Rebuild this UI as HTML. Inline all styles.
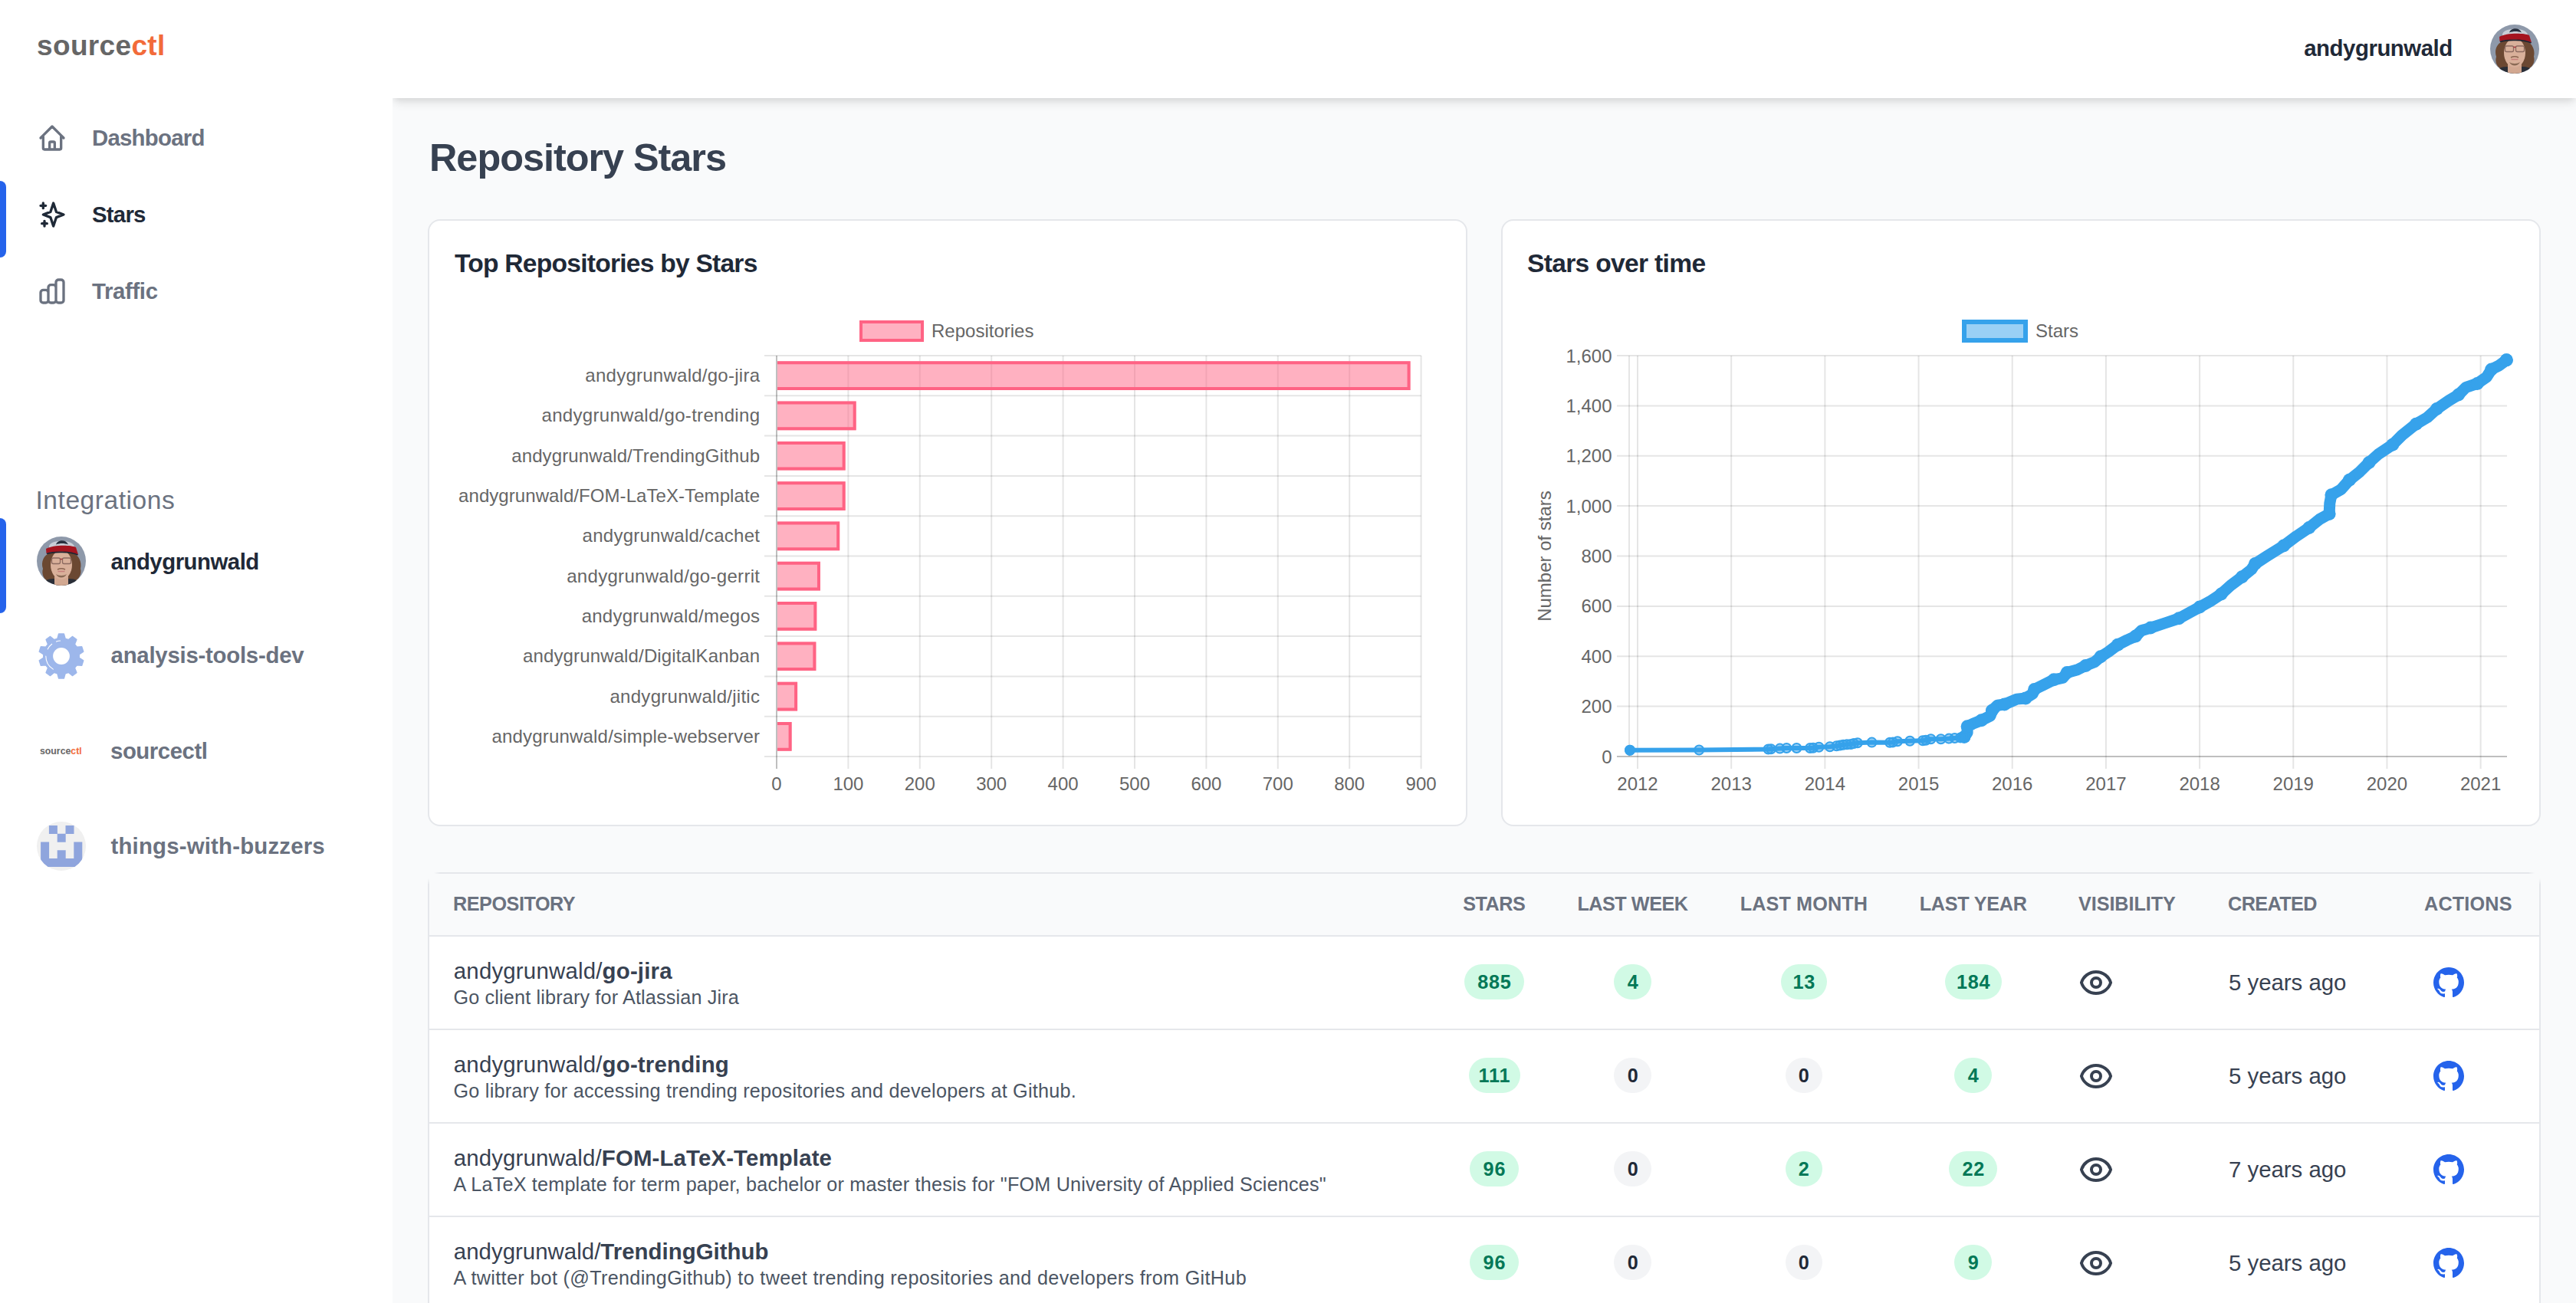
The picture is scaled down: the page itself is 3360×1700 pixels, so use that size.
<!DOCTYPE html>
<html><head><meta charset="utf-8"><title>sourcectl - Stars</title>
<style>
html,body{margin:0;padding:0;}
body{width:3360px;height:1700px;overflow:hidden;position:relative;background:#fff;font-family:"Liberation Sans", sans-serif;}
</style></head><body><div id="root" style="position:relative;width:3360px;height:1700px;overflow:hidden">
<div style="position:absolute;left:0;top:0;width:512px;height:1700px;background:#fff;z-index:3"><div style="position:absolute;top:40.88px;font-size:37.00px;line-height:37.00px;font-weight:700;color:#666666;white-space:nowrap;letter-spacing:0.350px;left:48.00px;">source<span style="color:#f26b3a">ctl</span></div><svg style="position:absolute;left:48px;top:160px" width="40" height="40" viewBox="0 0 24 24" fill="none" stroke="#6b7280" stroke-width="2" stroke-linecap="round" stroke-linejoin="round"><path d="M3 12l2-2m0 0l7-7 7 7M5 10v10a1 1 0 001 1h3m10-11l2 2m-2-2v10a1 1 0 01-1 1h-3m-6 0a1 1 0 001-1v-4a1 1 0 011-1h2a1 1 0 011 1v4a1 1 0 001 1m-6 0h6"/></svg><svg style="position:absolute;left:48px;top:260px" width="40" height="40" viewBox="0 0 24 24" fill="none" stroke="#1f2937" stroke-width="2" stroke-linecap="round" stroke-linejoin="round"><path d="M5 3v4M3 5h4M6 17v4m-2-2h4m5-16l2.286 6.857L21 12l-5.714 2.143L13 21l-2.286-6.857L5 12l5.714-2.143L13 3z"/></svg><svg style="position:absolute;left:48px;top:360px" width="40" height="40" viewBox="0 0 24 24" fill="none" stroke="#6b7280" stroke-width="2" stroke-linecap="round" stroke-linejoin="round"><path d="M9 19v-6a2 2 0 00-2-2H5a2 2 0 00-2 2v6a2 2 0 002 2h2a2 2 0 002-2zm0 0V9a2 2 0 012-2h2a2 2 0 012 2v10m-6 0a2 2 0 002 2h2a2 2 0 002-2m0 0V5a2 2 0 012-2h2a2 2 0 012 2v14a2 2 0 01-2 2h-2a2 2 0 01-2-2z"/></svg><div style="position:absolute;top:165.41px;font-size:29.40px;line-height:29.40px;font-weight:700;color:#6b7280;white-space:nowrap;letter-spacing:-0.770px;left:120.00px;">Dashboard</div><div style="position:absolute;top:264.81px;font-size:29.40px;line-height:29.40px;font-weight:700;color:#1f2937;white-space:nowrap;letter-spacing:-0.770px;left:120.00px;">Stars</div><div style="position:absolute;top:364.91px;font-size:29.40px;line-height:29.40px;font-weight:700;color:#6b7280;white-space:nowrap;letter-spacing:-0.370px;left:120.00px;">Traffic</div><div style="position:absolute;left:0;top:236px;width:8px;height:100px;background:#2563eb;border-radius:0 8px 8px 0"></div><div style="position:absolute;left:0;top:676px;width:8px;height:124px;background:#2563eb;border-radius:0 8px 8px 0"></div><div style="position:absolute;top:635.56px;font-size:33.60px;line-height:33.60px;font-weight:400;color:#6b7280;white-space:nowrap;letter-spacing:0.520px;left:46.50px;">Integrations</div><div style="position:absolute;top:717.61px;font-size:29.40px;line-height:29.40px;font-weight:700;color:#1f2937;white-space:nowrap;letter-spacing:-0.500px;left:144.60px;">andygrunwald</div><div style="position:absolute;top:840.11px;font-size:29.40px;line-height:29.40px;font-weight:700;color:#6b7280;white-space:nowrap;letter-spacing:-0.260px;left:144.60px;">analysis-tools-dev</div><div style="position:absolute;top:965.11px;font-size:29.40px;line-height:29.40px;font-weight:700;color:#6b7280;white-space:nowrap;letter-spacing:-0.470px;left:144.00px;">sourcectl</div><div style="position:absolute;top:1089.11px;font-size:29.40px;line-height:29.40px;font-weight:700;color:#6b7280;white-space:nowrap;letter-spacing:0.180px;left:144.50px;">things-with-buzzers</div><svg style="position:absolute;left:48px;top:700px" width="64" height="64" viewBox="0 0 64 64">
<defs><clipPath id="ac48700"><circle cx="32" cy="32" r="32"/></clipPath></defs>
<g clip-path="url(#ac48700)">
<rect width="64" height="64" fill="#8e99aa"/>
<path d="M8 42 C5 33 9 24 18 21 L46 21 C55 24 59 33 57 42 C59 49 55 55 50 58 L14 58 C9 55 6 49 8 42Z" fill="#6b4832"/>
<path d="M6 64 C8 58 14 55 22 55 L42 55 C50 55 56 58 58 64Z" fill="#2a2e37"/>
<rect x="23" y="50" width="18" height="14" fill="#d2a891"/>
<ellipse cx="32" cy="37" rx="14" ry="19" fill="#d9b09a"/>
<path d="M25 49 C28 55 36 55 39 49 C36 51.5 28 51.5 25 49Z" fill="#8a6a55"/>
<path d="M27 43 C30 41.5 34 41.5 37 43" stroke="#8a6450" stroke-width="1.4" fill="none"/>
<path d="M27.5 45.5 h9" stroke="#c77f7c" stroke-width="1.6"/>
<rect x="19.5" y="28" width="11" height="7.5" rx="2" fill="none" stroke="#8c6a60" stroke-width="1.3"/>
<rect x="33.5" y="28" width="11" height="7.5" rx="2" fill="none" stroke="#8c6a60" stroke-width="1.3"/>
<path d="M30.5 29.5 h3" stroke="#a8323a" stroke-width="1.4"/>
<path d="M16 13 C17 4 46 3 49 13 L49 16 L16 16Z" fill="#c9ced6"/>
<path d="M25 10.5 C27 4 38 3 41 10.5 C36 8.5 30 8.5 25 10.5Z" fill="#28303e"/>
<path d="M12 16 C20 11 43 10.5 51 14 L54 23.5 C44 19 22 18.5 12.5 22Z" fill="#a5141f"/>
<path d="M13 22.5 C22 19.5 44 19.5 53.5 24" stroke="#1e2330" stroke-width="1.8" fill="none"/>
</g></svg><svg style="position:absolute;left:44px;top:820px" width="72" height="72" viewBox="0 0 72 72">
<path d="M30.80 13.80 L32.64 6.89 L39.36 6.89 L41.20 13.80 L44.84 14.98 L50.39 10.48 L55.83 14.43 L53.25 21.10 L55.51 24.20 L62.64 23.81 L64.72 30.20 L58.72 34.08 L58.72 37.92 L64.72 41.80 L62.64 48.19 L55.51 47.80 L53.25 50.90 L55.83 57.57 L50.39 61.52 L44.84 57.02 L41.20 58.20 L39.36 65.11 L32.64 65.11 L30.80 58.20 L27.16 57.02 L21.61 61.52 L16.17 57.57 L18.75 50.90 L16.49 47.80 L9.36 48.19 L7.28 41.80 L13.28 37.92 L13.28 34.08 L7.28 30.20 L9.36 23.81 L16.49 24.20 L18.75 21.10 L16.17 14.43 L21.61 10.48 L27.16 14.98Z" fill="#9db7eb" stroke="#9db7eb" stroke-width="1.5" stroke-linejoin="round"/>
<circle cx="36" cy="36" r="24" fill="#9db7eb"/>
<circle cx="36" cy="36" r="10.9" fill="#fff"/>
<path d="M25.30 53.13 A20.2 20.2 0 0 1 15.80 36.00 M18.18 26.92 A20 20 0 0 1 23.69 20.24 M29.49 17.09 A20 20 0 0 1 34.60 16.05" stroke="#fff" stroke-width="1.1" fill="none" stroke-linecap="round"/>
</svg><div style="position:absolute;top:973.59px;font-size:12.30px;line-height:12.30px;font-weight:700;color:#666666;white-space:nowrap;left:52.00px;">source<span style="color:#f26b3a">ctl</span></div><svg style="position:absolute;left:48px;top:1072px" width="64" height="64" viewBox="0 0 64 64">
<defs><clipPath id="idc"><circle cx="32" cy="32" r="32"/></clipPath></defs>
<g clip-path="url(#idc)"><rect width="64" height="64" fill="#f0f0f0"/><path fill="#8fa5dd" d="M15.90 4.90h11v11h-11zM37.50 4.90h11v11h-11zM26.70 15.70h11v11h-11zM5.10 26.50h11v11h-11zM48.30 26.50h11v11h-11zM5.10 37.30h11v11h-11zM26.70 37.30h11v11h-11zM48.30 37.30h11v11h-11zM5.10 48.10h11v11h-11zM15.90 48.10h11v11h-11zM26.70 48.10h11v11h-11zM37.50 48.10h11v11h-11zM48.30 48.10h11v11h-11z"/></g></svg></div><div style="position:absolute;left:512px;top:0;width:2848px;height:128px;background:#fff;box-shadow:0 8px 12px -2px rgba(0,0,0,.1),0 4px 8px -2px rgba(0,0,0,.06);z-index:2"></div><div style="position:absolute;left:0;top:0;width:3360px;height:128px;z-index:3"><div style="position:absolute;top:47.81px;font-size:29.40px;line-height:29.40px;font-weight:700;color:#1f2937;white-space:nowrap;letter-spacing:-0.470px;right:161.20px;">andygrunwald</div><svg style="position:absolute;left:3248px;top:32px" width="64" height="64" viewBox="0 0 64 64">
<defs><clipPath id="ac324832"><circle cx="32" cy="32" r="32"/></clipPath></defs>
<g clip-path="url(#ac324832)">
<rect width="64" height="64" fill="#8e99aa"/>
<path d="M8 42 C5 33 9 24 18 21 L46 21 C55 24 59 33 57 42 C59 49 55 55 50 58 L14 58 C9 55 6 49 8 42Z" fill="#6b4832"/>
<path d="M6 64 C8 58 14 55 22 55 L42 55 C50 55 56 58 58 64Z" fill="#2a2e37"/>
<rect x="23" y="50" width="18" height="14" fill="#d2a891"/>
<ellipse cx="32" cy="37" rx="14" ry="19" fill="#d9b09a"/>
<path d="M25 49 C28 55 36 55 39 49 C36 51.5 28 51.5 25 49Z" fill="#8a6a55"/>
<path d="M27 43 C30 41.5 34 41.5 37 43" stroke="#8a6450" stroke-width="1.4" fill="none"/>
<path d="M27.5 45.5 h9" stroke="#c77f7c" stroke-width="1.6"/>
<rect x="19.5" y="28" width="11" height="7.5" rx="2" fill="none" stroke="#8c6a60" stroke-width="1.3"/>
<rect x="33.5" y="28" width="11" height="7.5" rx="2" fill="none" stroke="#8c6a60" stroke-width="1.3"/>
<path d="M30.5 29.5 h3" stroke="#a8323a" stroke-width="1.4"/>
<path d="M16 13 C17 4 46 3 49 13 L49 16 L16 16Z" fill="#c9ced6"/>
<path d="M25 10.5 C27 4 38 3 41 10.5 C36 8.5 30 8.5 25 10.5Z" fill="#28303e"/>
<path d="M12 16 C20 11 43 10.5 51 14 L54 23.5 C44 19 22 18.5 12.5 22Z" fill="#a5141f"/>
<path d="M13 22.5 C22 19.5 44 19.5 53.5 24" stroke="#1e2330" stroke-width="1.8" fill="none"/>
</g></svg></div><div style="position:absolute;left:512px;top:128px;width:2848px;height:1572px;background:#f9fafb;z-index:1"></div>
<div style="position:absolute;left:0;top:0;width:3360px;height:1700px;z-index:4">
<div style="position:absolute;top:181.34px;font-size:50.40px;line-height:50.40px;font-weight:700;color:#374151;white-space:nowrap;letter-spacing:-1.020px;left:560.00px;">Repository Stars</div><div style="position:absolute;left:558px;top:286px;width:1352px;height:788px;border:2px solid #e5e7eb;border-radius:16px;background:#fff"></div><div style="position:absolute;left:1958px;top:286px;width:1352px;height:788px;border:2px solid #e5e7eb;border-radius:16px;background:#fff"></div><div style="position:absolute;top:327.46px;font-size:33.60px;line-height:33.60px;font-weight:700;color:#1f2937;white-space:nowrap;letter-spacing:-0.760px;left:593.00px;">Top Repositories by Stars</div><div style="position:absolute;top:327.46px;font-size:33.60px;line-height:33.60px;font-weight:700;color:#1f2937;white-space:nowrap;letter-spacing:-0.680px;left:1992.00px;">Stars over time</div><svg width="3360" height="1700" viewBox="0 0 3360 1700" style="position:absolute;left:0;top:0;font-family:'Liberation Sans',sans-serif"><line x1="997" y1="464.00" x2="1853.60" y2="464.00" stroke="rgba(0,0,0,0.1)" stroke-width="2"/><line x1="997" y1="516.30" x2="1853.60" y2="516.30" stroke="rgba(0,0,0,0.1)" stroke-width="2"/><line x1="997" y1="568.60" x2="1853.60" y2="568.60" stroke="rgba(0,0,0,0.1)" stroke-width="2"/><line x1="997" y1="620.90" x2="1853.60" y2="620.90" stroke="rgba(0,0,0,0.1)" stroke-width="2"/><line x1="997" y1="673.20" x2="1853.60" y2="673.20" stroke="rgba(0,0,0,0.1)" stroke-width="2"/><line x1="997" y1="725.50" x2="1853.60" y2="725.50" stroke="rgba(0,0,0,0.1)" stroke-width="2"/><line x1="997" y1="777.80" x2="1853.60" y2="777.80" stroke="rgba(0,0,0,0.1)" stroke-width="2"/><line x1="997" y1="830.10" x2="1853.60" y2="830.10" stroke="rgba(0,0,0,0.1)" stroke-width="2"/><line x1="997" y1="882.40" x2="1853.60" y2="882.40" stroke="rgba(0,0,0,0.1)" stroke-width="2"/><line x1="997" y1="934.70" x2="1853.60" y2="934.70" stroke="rgba(0,0,0,0.1)" stroke-width="2"/><line x1="997" y1="987.00" x2="1853.60" y2="987.00" stroke="rgba(0,0,0,0.1)" stroke-width="2"/><line x1="1013.00" y1="464.00" x2="1013.00" y2="1003" stroke="rgba(0,0,0,0.25)" stroke-width="2"/><text x="1013.00" y="1030.7" text-anchor="middle" font-size="24" fill="#666">0</text><line x1="1106.40" y1="464.00" x2="1106.40" y2="1003" stroke="rgba(0,0,0,0.1)" stroke-width="2"/><text x="1106.40" y="1030.7" text-anchor="middle" font-size="24" fill="#666">100</text><line x1="1199.80" y1="464.00" x2="1199.80" y2="1003" stroke="rgba(0,0,0,0.1)" stroke-width="2"/><text x="1199.80" y="1030.7" text-anchor="middle" font-size="24" fill="#666">200</text><line x1="1293.20" y1="464.00" x2="1293.20" y2="1003" stroke="rgba(0,0,0,0.1)" stroke-width="2"/><text x="1293.20" y="1030.7" text-anchor="middle" font-size="24" fill="#666">300</text><line x1="1386.60" y1="464.00" x2="1386.60" y2="1003" stroke="rgba(0,0,0,0.1)" stroke-width="2"/><text x="1386.60" y="1030.7" text-anchor="middle" font-size="24" fill="#666">400</text><line x1="1480.00" y1="464.00" x2="1480.00" y2="1003" stroke="rgba(0,0,0,0.1)" stroke-width="2"/><text x="1480.00" y="1030.7" text-anchor="middle" font-size="24" fill="#666">500</text><line x1="1573.40" y1="464.00" x2="1573.40" y2="1003" stroke="rgba(0,0,0,0.1)" stroke-width="2"/><text x="1573.40" y="1030.7" text-anchor="middle" font-size="24" fill="#666">600</text><line x1="1666.80" y1="464.00" x2="1666.80" y2="1003" stroke="rgba(0,0,0,0.1)" stroke-width="2"/><text x="1666.80" y="1030.7" text-anchor="middle" font-size="24" fill="#666">700</text><line x1="1760.20" y1="464.00" x2="1760.20" y2="1003" stroke="rgba(0,0,0,0.1)" stroke-width="2"/><text x="1760.20" y="1030.7" text-anchor="middle" font-size="24" fill="#666">800</text><line x1="1853.60" y1="464.00" x2="1853.60" y2="1003" stroke="rgba(0,0,0,0.1)" stroke-width="2"/><text x="1853.60" y="1030.7" text-anchor="middle" font-size="24" fill="#666">900</text><rect x="1014.00" y="471.32" width="825.59" height="37.66" fill="rgba(255,99,132,0.5)"/><path d="M1014.00 473.32H1837.59V506.98H1014.00" fill="none" stroke="rgb(255,99,132)" stroke-width="4"/><text x="991.25" y="498.15" text-anchor="end" font-size="24" fill="#666" letter-spacing="0.255">andygrunwald/go-jira</text><rect x="1014.00" y="523.62" width="102.67" height="37.66" fill="rgba(255,99,132,0.5)"/><path d="M1014.00 525.62H1114.67V559.28H1014.00" fill="none" stroke="rgb(255,99,132)" stroke-width="4"/><text x="991.30" y="550.45" text-anchor="end" font-size="24" fill="#666" letter-spacing="0.3">andygrunwald/go-trending</text><rect x="1014.00" y="575.92" width="88.66" height="37.66" fill="rgba(255,99,132,0.5)"/><path d="M1014.00 577.92H1100.66V611.58H1014.00" fill="none" stroke="rgb(255,99,132)" stroke-width="4"/><text x="991.12" y="602.75" text-anchor="end" font-size="24" fill="#666" letter-spacing="0.12">andygrunwald/TrendingGithub</text><rect x="1014.00" y="628.22" width="88.66" height="37.66" fill="rgba(255,99,132,0.5)"/><path d="M1014.00 630.22H1100.66V663.88H1014.00" fill="none" stroke="rgb(255,99,132)" stroke-width="4"/><text x="991.07" y="655.05" text-anchor="end" font-size="24" fill="#666" letter-spacing="0.07">andygrunwald/FOM-LaTeX-Template</text><rect x="1014.00" y="680.52" width="81.19" height="37.66" fill="rgba(255,99,132,0.5)"/><path d="M1014.00 682.52H1093.19V716.18H1014.00" fill="none" stroke="rgb(255,99,132)" stroke-width="4"/><text x="991.25" y="707.35" text-anchor="end" font-size="24" fill="#666" letter-spacing="0.255">andygrunwald/cachet</text><rect x="1014.00" y="732.82" width="55.97" height="37.66" fill="rgba(255,99,132,0.5)"/><path d="M1014.00 734.82H1067.97V768.48H1014.00" fill="none" stroke="rgb(255,99,132)" stroke-width="4"/><text x="991.30" y="759.65" text-anchor="end" font-size="24" fill="#666" letter-spacing="0.3">andygrunwald/go-gerrit</text><rect x="1014.00" y="785.12" width="51.30" height="37.66" fill="rgba(255,99,132,0.5)"/><path d="M1014.00 787.12H1063.30V820.78H1014.00" fill="none" stroke="rgb(255,99,132)" stroke-width="4"/><text x="991.24" y="811.95" text-anchor="end" font-size="24" fill="#666" letter-spacing="0.244">andygrunwald/megos</text><rect x="1014.00" y="837.42" width="50.37" height="37.66" fill="rgba(255,99,132,0.5)"/><path d="M1014.00 839.42H1062.37V873.08H1014.00" fill="none" stroke="rgb(255,99,132)" stroke-width="4"/><text x="991.14" y="864.25" text-anchor="end" font-size="24" fill="#666" letter-spacing="0.138">andygrunwald/DigitalKanban</text><rect x="1014.00" y="889.72" width="26.09" height="37.66" fill="rgba(255,99,132,0.5)"/><path d="M1014.00 891.72H1038.09V925.38H1014.00" fill="none" stroke="rgb(255,99,132)" stroke-width="4"/><text x="991.28" y="916.55" text-anchor="end" font-size="24" fill="#666" letter-spacing="0.278">andygrunwald/jitic</text><rect x="1014.00" y="942.02" width="18.61" height="37.66" fill="rgba(255,99,132,0.5)"/><path d="M1014.00 944.02H1030.61V977.68H1014.00" fill="none" stroke="rgb(255,99,132)" stroke-width="4"/><text x="991.20" y="968.85" text-anchor="end" font-size="24" fill="#666" letter-spacing="0.195">andygrunwald/simple-webserver</text><rect x="1123" y="420" width="80" height="24" fill="rgba(255,99,132,0.5)" stroke="rgb(255,99,132)" stroke-width="4"/><text x="1215" y="440" font-size="24" fill="#666">Repositories</text><line x1="2109" y1="987.00" x2="3270.00" y2="987.00" stroke="rgba(0,0,0,0.25)" stroke-width="2"/><text x="2102.5" y="995.50" text-anchor="end" font-size="24" fill="#666">0</text><line x1="2109" y1="921.62" x2="3270.00" y2="921.62" stroke="rgba(0,0,0,0.1)" stroke-width="2"/><text x="2102.5" y="930.12" text-anchor="end" font-size="24" fill="#666">200</text><line x1="2109" y1="856.25" x2="3270.00" y2="856.25" stroke="rgba(0,0,0,0.1)" stroke-width="2"/><text x="2102.5" y="864.75" text-anchor="end" font-size="24" fill="#666">400</text><line x1="2109" y1="790.88" x2="3270.00" y2="790.88" stroke="rgba(0,0,0,0.1)" stroke-width="2"/><text x="2102.5" y="799.38" text-anchor="end" font-size="24" fill="#666">600</text><line x1="2109" y1="725.50" x2="3270.00" y2="725.50" stroke="rgba(0,0,0,0.1)" stroke-width="2"/><text x="2102.5" y="734.00" text-anchor="end" font-size="24" fill="#666">800</text><line x1="2109" y1="660.12" x2="3270.00" y2="660.12" stroke="rgba(0,0,0,0.1)" stroke-width="2"/><text x="2102.5" y="668.62" text-anchor="end" font-size="24" fill="#666">1,000</text><line x1="2109" y1="594.75" x2="3270.00" y2="594.75" stroke="rgba(0,0,0,0.1)" stroke-width="2"/><text x="2102.5" y="603.25" text-anchor="end" font-size="24" fill="#666">1,200</text><line x1="2109" y1="529.38" x2="3270.00" y2="529.38" stroke="rgba(0,0,0,0.1)" stroke-width="2"/><text x="2102.5" y="537.88" text-anchor="end" font-size="24" fill="#666">1,400</text><line x1="2109" y1="464.00" x2="3270.00" y2="464.00" stroke="rgba(0,0,0,0.1)" stroke-width="2"/><text x="2102.5" y="472.50" text-anchor="end" font-size="24" fill="#666">1,600</text><line x1="2125.0" y1="464.0" x2="2125.0" y2="987.0" stroke="rgba(0,0,0,0.1)" stroke-width="2"/><line x1="2136.00" y1="464.0" x2="2136.00" y2="1003" stroke="rgba(0,0,0,0.1)" stroke-width="2"/><text x="2136.00" y="1030.7" text-anchor="middle" font-size="24" fill="#666">2012</text><line x1="2258.18" y1="464.0" x2="2258.18" y2="1003" stroke="rgba(0,0,0,0.1)" stroke-width="2"/><text x="2258.18" y="1030.7" text-anchor="middle" font-size="24" fill="#666">2013</text><line x1="2380.36" y1="464.0" x2="2380.36" y2="1003" stroke="rgba(0,0,0,0.1)" stroke-width="2"/><text x="2380.36" y="1030.7" text-anchor="middle" font-size="24" fill="#666">2014</text><line x1="2502.54" y1="464.0" x2="2502.54" y2="1003" stroke="rgba(0,0,0,0.1)" stroke-width="2"/><text x="2502.54" y="1030.7" text-anchor="middle" font-size="24" fill="#666">2015</text><line x1="2624.72" y1="464.0" x2="2624.72" y2="1003" stroke="rgba(0,0,0,0.1)" stroke-width="2"/><text x="2624.72" y="1030.7" text-anchor="middle" font-size="24" fill="#666">2016</text><line x1="2746.90" y1="464.0" x2="2746.90" y2="1003" stroke="rgba(0,0,0,0.1)" stroke-width="2"/><text x="2746.90" y="1030.7" text-anchor="middle" font-size="24" fill="#666">2017</text><line x1="2869.08" y1="464.0" x2="2869.08" y2="1003" stroke="rgba(0,0,0,0.1)" stroke-width="2"/><text x="2869.08" y="1030.7" text-anchor="middle" font-size="24" fill="#666">2018</text><line x1="2991.26" y1="464.0" x2="2991.26" y2="1003" stroke="rgba(0,0,0,0.1)" stroke-width="2"/><text x="2991.26" y="1030.7" text-anchor="middle" font-size="24" fill="#666">2019</text><line x1="3113.44" y1="464.0" x2="3113.44" y2="1003" stroke="rgba(0,0,0,0.1)" stroke-width="2"/><text x="3113.44" y="1030.7" text-anchor="middle" font-size="24" fill="#666">2020</text><line x1="3235.62" y1="464.0" x2="3235.62" y2="1003" stroke="rgba(0,0,0,0.1)" stroke-width="2"/><text x="3235.62" y="1030.7" text-anchor="middle" font-size="24" fill="#666">2021</text><text transform="translate(2023 725.5) rotate(-90)" text-anchor="middle" font-size="24" fill="#666">Number of stars</text><rect x="2562" y="420" width="80" height="24" fill="rgba(54,162,235,0.5)" stroke="rgb(54,162,235)" stroke-width="6"/><text x="2655" y="440" font-size="24" fill="#666">Stars</text><path d="M2126.0 978.7 L2216.2 978.5 L2306.5 977.5 L2310.0 977.3 L2321.6 976.6 L2330.3 976.0 L2343.4 976.0 L2361.0 976.0 L2365.0 975.7 L2372.5 974.8 L2386.8 974.2 L2395.5 973.3 L2400.0 972.5 L2404.2 971.7 L2409.0 971.3 L2414.2 971.0 L2418.0 970.0 L2422.9 969.2 L2441.5 968.6 L2465.0 968.8 L2469.0 968.4 L2475.0 967.3 L2491.2 966.7 L2508.0 966.3 L2512.0 965.8 L2518.5 964.2 L2531.6 964.2 L2542.1 963.6 L2549.6 963.0 L2557.0 962.4 L2562.0 961.5 L2566.1 955.9 L2566.1 947.8 L2573.0 944.4 L2584.5 939.8 L2596.1 934.0 L2598.4 927.1 L2605.3 920.2 L2614.5 919.0 L2630.6 912.1 L2642.1 911.0 L2651.3 905.2 L2653.6 899.4 L2665.1 893.7 L2679.0 886.8 L2690.5 884.5 L2696.2 877.6 L2708.9 874.1 L2720.4 868.4 L2731.9 863.8 L2740.0 856.8 L2750.0 850.5 L2762.3 841.2 L2774.6 835.0 L2785.6 830.1 L2793.0 822.8 L2805.2 819.1 L2823.7 813.0 L2842.1 806.8 L2858.0 798.2 L2869.1 792.1 L2882.6 784.7 L2897.3 774.9 L2909.6 763.8 L2924.3 752.8 L2936.6 743.0 L2941.5 735.6 L2956.6 725.8 L2978.7 712.0 L2995.3 699.6 L3011.8 688.5 L3025.7 677.4 L3038.1 670.5 L3038.8 656.7 L3040.9 645.7 L3053.3 638.8 L3064.4 626.3 L3078.2 615.3 L3090.0 603.5 L3102.3 592.5 L3120.7 580.2 L3133.0 567.9 L3151.4 553.2 L3166.1 544.6 L3178.4 533.5 L3194.4 522.5 L3206.7 515.1 L3216.5 505.3 L3231.2 500.4 L3243.5 491.8 L3249.7 481.9 L3259.5 477.0 L3269.3 469.7" fill="none" stroke="rgb(54,162,235)" stroke-width="6" stroke-linejoin="round"/><path d="M2562.0 961.5 L2566.1 955.9 L2566.1 947.8 L2573.0 944.4 L2584.5 939.8 L2596.1 934.0 L2598.4 927.1 L2605.3 920.2 L2614.5 919.0 L2630.6 912.1 L2642.1 911.0 L2651.3 905.2 L2653.6 899.4 L2665.1 893.7 L2679.0 886.8 L2690.5 884.5 L2696.2 877.6 L2708.9 874.1 L2720.4 868.4 L2731.9 863.8 L2740.0 856.8 L2750.0 850.5 L2762.3 841.2 L2774.6 835.0 L2785.6 830.1 L2793.0 822.8 L2805.2 819.1 L2823.7 813.0 L2842.1 806.8 L2858.0 798.2 L2869.1 792.1 L2882.6 784.7 L2897.3 774.9 L2909.6 763.8 L2924.3 752.8 L2936.6 743.0 L2941.5 735.6 L2956.6 725.8 L2978.7 712.0 L2995.3 699.6 L3011.8 688.5 L3025.7 677.4 L3038.1 670.5 L3038.8 656.7 L3040.9 645.7 L3053.3 638.8 L3064.4 626.3 L3078.2 615.3 L3090.0 603.5 L3102.3 592.5 L3120.7 580.2 L3133.0 567.9 L3151.4 553.2 L3166.1 544.6 L3178.4 533.5 L3194.4 522.5 L3206.7 515.1 L3216.5 505.3 L3231.2 500.4 L3243.5 491.8 L3249.7 481.9 L3259.5 477.0 L3269.3 469.7" fill="none" stroke="rgb(54,162,235)" stroke-width="15" stroke-linejoin="round" stroke-linecap="round"/><g fill="rgb(54,162,235)"><circle cx="2562" cy="961.5" r="8.5"/><circle cx="2566.1" cy="947.8" r="8.5"/><circle cx="2584.5" cy="939.8" r="8.5"/><circle cx="2598.4" cy="927.1" r="8.5"/><circle cx="2614.5" cy="919" r="8.5"/><circle cx="2642.1" cy="911" r="8.5"/><circle cx="2653.6" cy="899.4" r="8.5"/><circle cx="2679" cy="886.8" r="8.5"/><circle cx="2696.2" cy="877.6" r="8.5"/><circle cx="2720.4" cy="868.4" r="8.5"/><circle cx="2740" cy="856.8" r="8.5"/><circle cx="2762.3" cy="841.2" r="8.5"/><circle cx="2785.6" cy="830.1" r="8.5"/><circle cx="2805.2" cy="819.1" r="8.5"/><circle cx="2842.1" cy="806.8" r="8.5"/><circle cx="2869.1" cy="792.1" r="8.5"/><circle cx="2897.3" cy="774.9" r="8.5"/><circle cx="2924.3" cy="752.8" r="8.5"/><circle cx="2941.5" cy="735.6" r="8.5"/><circle cx="2978.7" cy="712" r="8.5"/><circle cx="3011.8" cy="688.5" r="8.5"/><circle cx="3038.1" cy="670.5" r="8.5"/><circle cx="3040.9" cy="645.7" r="8.5"/><circle cx="3064.4" cy="626.3" r="8.5"/><circle cx="3090" cy="603.5" r="8.5"/><circle cx="3120.7" cy="580.2" r="8.5"/><circle cx="3151.4" cy="553.2" r="8.5"/><circle cx="3178.4" cy="533.5" r="8.5"/><circle cx="3206.7" cy="515.1" r="8.5"/><circle cx="3231.2" cy="500.4" r="8.5"/><circle cx="3249.7" cy="481.9" r="8.5"/><circle cx="3269.3" cy="469.7" r="8.5"/></g><circle cx="3269.3" cy="469.7" r="8.5" fill="rgb(54,162,235)"/><circle cx="2126" cy="978.7" r="6" fill="rgba(54,162,235,0.5)" stroke="rgb(54,162,235)" stroke-width="2"/><circle cx="2216.2" cy="978.5" r="6" fill="rgba(54,162,235,0.5)" stroke="rgb(54,162,235)" stroke-width="2"/><circle cx="2306.5" cy="977.5" r="6" fill="rgba(54,162,235,0.5)" stroke="rgb(54,162,235)" stroke-width="2"/><circle cx="2310" cy="977.3" r="6" fill="rgba(54,162,235,0.5)" stroke="rgb(54,162,235)" stroke-width="2"/><circle cx="2321.6" cy="976.6" r="6" fill="rgba(54,162,235,0.5)" stroke="rgb(54,162,235)" stroke-width="2"/><circle cx="2330.3" cy="976" r="6" fill="rgba(54,162,235,0.5)" stroke="rgb(54,162,235)" stroke-width="2"/><circle cx="2343.4" cy="976" r="6" fill="rgba(54,162,235,0.5)" stroke="rgb(54,162,235)" stroke-width="2"/><circle cx="2361" cy="976" r="6" fill="rgba(54,162,235,0.5)" stroke="rgb(54,162,235)" stroke-width="2"/><circle cx="2365" cy="975.7" r="6" fill="rgba(54,162,235,0.5)" stroke="rgb(54,162,235)" stroke-width="2"/><circle cx="2372.5" cy="974.8" r="6" fill="rgba(54,162,235,0.5)" stroke="rgb(54,162,235)" stroke-width="2"/><circle cx="2386.8" cy="974.2" r="6" fill="rgba(54,162,235,0.5)" stroke="rgb(54,162,235)" stroke-width="2"/><circle cx="2395.5" cy="973.3" r="6" fill="rgba(54,162,235,0.5)" stroke="rgb(54,162,235)" stroke-width="2"/><circle cx="2400" cy="972.5" r="6" fill="rgba(54,162,235,0.5)" stroke="rgb(54,162,235)" stroke-width="2"/><circle cx="2404.2" cy="971.7" r="6" fill="rgba(54,162,235,0.5)" stroke="rgb(54,162,235)" stroke-width="2"/><circle cx="2409" cy="971.3" r="6" fill="rgba(54,162,235,0.5)" stroke="rgb(54,162,235)" stroke-width="2"/><circle cx="2414.2" cy="971" r="6" fill="rgba(54,162,235,0.5)" stroke="rgb(54,162,235)" stroke-width="2"/><circle cx="2418" cy="970" r="6" fill="rgba(54,162,235,0.5)" stroke="rgb(54,162,235)" stroke-width="2"/><circle cx="2422.9" cy="969.2" r="6" fill="rgba(54,162,235,0.5)" stroke="rgb(54,162,235)" stroke-width="2"/><circle cx="2441.5" cy="968.6" r="6" fill="rgba(54,162,235,0.5)" stroke="rgb(54,162,235)" stroke-width="2"/><circle cx="2465" cy="968.8" r="6" fill="rgba(54,162,235,0.5)" stroke="rgb(54,162,235)" stroke-width="2"/><circle cx="2469" cy="968.4" r="6" fill="rgba(54,162,235,0.5)" stroke="rgb(54,162,235)" stroke-width="2"/><circle cx="2475" cy="967.3" r="6" fill="rgba(54,162,235,0.5)" stroke="rgb(54,162,235)" stroke-width="2"/><circle cx="2491.2" cy="966.7" r="6" fill="rgba(54,162,235,0.5)" stroke="rgb(54,162,235)" stroke-width="2"/><circle cx="2508" cy="966.3" r="6" fill="rgba(54,162,235,0.5)" stroke="rgb(54,162,235)" stroke-width="2"/><circle cx="2512" cy="965.8" r="6" fill="rgba(54,162,235,0.5)" stroke="rgb(54,162,235)" stroke-width="2"/><circle cx="2518.5" cy="964.2" r="6" fill="rgba(54,162,235,0.5)" stroke="rgb(54,162,235)" stroke-width="2"/><circle cx="2531.6" cy="964.2" r="6" fill="rgba(54,162,235,0.5)" stroke="rgb(54,162,235)" stroke-width="2"/><circle cx="2542.1" cy="963.6" r="6" fill="rgba(54,162,235,0.5)" stroke="rgb(54,162,235)" stroke-width="2"/><circle cx="2549.6" cy="963" r="6" fill="rgba(54,162,235,0.5)" stroke="rgb(54,162,235)" stroke-width="2"/><circle cx="2557" cy="962.4" r="6" fill="rgba(54,162,235,0.5)" stroke="rgb(54,162,235)" stroke-width="2"/><circle cx="2562" cy="961.5" r="6" fill="rgba(54,162,235,0.5)" stroke="rgb(54,162,235)" stroke-width="2"/><circle cx="2126" cy="978.7" r="7" fill="rgb(54,162,235)"/></svg><div style="position:absolute;left:560px;top:1222px;width:2752px;height:600px;background:#fff"></div><div style="position:absolute;left:566px;top:1138px;width:2740px;height:2px;background:linear-gradient(90deg,rgba(229,231,235,0),#e5e7eb 8px,#e5e7eb 2732px,rgba(229,231,235,0))"></div><div style="position:absolute;left:558px;top:1146px;width:2px;height:600px;background:linear-gradient(180deg,rgba(229,231,235,0),#e5e7eb 8px)"></div><div style="position:absolute;left:3312px;top:1146px;width:2px;height:600px;background:linear-gradient(180deg,rgba(229,231,235,0),#e5e7eb 8px)"></div><div style="position:absolute;left:560px;top:1220px;width:2752px;height:2px;background:#e5e7eb"></div><div style="position:absolute;left:560px;top:1342px;width:2752px;height:2px;background:#e5e7eb"></div><div style="position:absolute;left:560px;top:1464px;width:2752px;height:2px;background:#e5e7eb"></div><div style="position:absolute;left:560px;top:1586px;width:2752px;height:2px;background:#e5e7eb"></div><div style="position:absolute;top:1167.17px;font-size:25.20px;line-height:25.20px;font-weight:700;color:#6b7280;white-space:nowrap;letter-spacing:-0.460px;left:591.00px;">REPOSITORY</div><div style="position:absolute;top:1167.17px;font-size:25.20px;line-height:25.20px;font-weight:700;color:#6b7280;white-space:nowrap;letter-spacing:-0.460px;left:948.77px;width:2000px;text-align:center;">STARS</div><div style="position:absolute;top:1167.17px;font-size:25.20px;line-height:25.20px;font-weight:700;color:#6b7280;white-space:nowrap;letter-spacing:-0.460px;left:1129.47px;width:2000px;text-align:center;">LAST WEEK</div><div style="position:absolute;top:1167.17px;font-size:25.20px;line-height:25.20px;font-weight:700;color:#6b7280;white-space:nowrap;letter-spacing:0.140px;left:1352.92px;width:2000px;text-align:center;">LAST MONTH</div><div style="position:absolute;top:1167.17px;font-size:25.20px;line-height:25.20px;font-weight:700;color:#6b7280;white-space:nowrap;letter-spacing:-0.260px;left:1573.67px;width:2000px;text-align:center;">LAST YEAR</div><div style="position:absolute;top:1167.17px;font-size:25.20px;line-height:25.20px;font-weight:700;color:#6b7280;white-space:nowrap;letter-spacing:-0.060px;left:2711.00px;">VISIBILITY</div><div style="position:absolute;top:1167.17px;font-size:25.20px;line-height:25.20px;font-weight:700;color:#6b7280;white-space:nowrap;letter-spacing:-0.560px;left:2906.00px;">CREATED</div><div style="position:absolute;top:1167.17px;font-size:25.20px;line-height:25.20px;font-weight:700;color:#6b7280;white-space:nowrap;letter-spacing:0.190px;left:3162.00px;">ACTIONS</div><div style="position:absolute;top:1251.71px;font-size:29.40px;line-height:29.40px;font-weight:400;color:#374151;white-space:nowrap;letter-spacing:0.200px;left:591.80px;">andygrunwald/<b style="font-weight:700">go-jira</b></div><div style="position:absolute;top:1288.97px;font-size:25.20px;line-height:25.20px;font-weight:400;color:#4b5563;white-space:nowrap;letter-spacing:0.160px;left:591.50px;">Go client library for Atlassian Jira</div><div style="position:absolute;left:1909.95px;top:1258.00px;width:78.10px;height:46px;line-height:46px;border-radius:23px;background:#d1fae5;color:#047857;font-size:25.2px;font-weight:700;letter-spacing:0.8px;text-indent:0.8px;text-align:center">885</div><div style="position:absolute;left:2105.35px;top:1258.00px;width:48.70px;height:46px;line-height:46px;border-radius:23px;background:#d1fae5;color:#047857;font-size:25.2px;font-weight:700;letter-spacing:0.8px;text-indent:0.8px;text-align:center">4</div><div style="position:absolute;left:2323.00px;top:1258.00px;width:59.70px;height:46px;line-height:46px;border-radius:23px;background:#d1fae5;color:#047857;font-size:25.2px;font-weight:700;letter-spacing:0.8px;text-indent:0.8px;text-align:center">13</div><div style="position:absolute;left:2536.60px;top:1258.00px;width:74.40px;height:46px;line-height:46px;border-radius:23px;background:#d1fae5;color:#047857;font-size:25.2px;font-weight:700;letter-spacing:0.8px;text-indent:0.8px;text-align:center">184</div><svg style="position:absolute;left:2709.7px;top:1258px" width="48" height="48" viewBox="0 0 24 24" fill="none" stroke="#374151" stroke-width="2" stroke-linecap="round" stroke-linejoin="round"><path d="M15 12a3 3 0 11-6 0 3 3 0 016 0z M2.458 12C3.732 7.943 7.523 5 12 5c4.478 0 8.268 2.943 9.542 7-1.274 4.057-5.064 7-9.542 7-4.477 0-8.268-2.943-9.542-7z"/></svg><div style="position:absolute;top:1267.41px;font-size:29.40px;line-height:29.40px;font-weight:400;color:#374151;white-space:nowrap;letter-spacing:-0.020px;left:2907.00px;">5 years ago</div><svg style="position:absolute;left:3174px;top:1262.3px" width="40" height="40" viewBox="0 0 16 16" fill="#2563eb"><path d="M8 0C3.58 0 0 3.58 0 8c0 3.54 2.29 6.53 5.47 7.59.4.07.55-.17.55-.38 0-.19-.01-.82-.01-1.49-2.01.37-2.53-.49-2.69-.94-.09-.23-.48-.94-.82-1.13-.28-.15-.68-.52-.01-.53.63-.01 1.08.58 1.23.82.72 1.21 1.87.87 2.33.66.07-.52.28-.87.51-1.07-1.78-.2-3.64-.89-3.64-3.95 0-.87.31-1.59.82-2.15-.08-.2-.36-1.02.08-2.12 0 0 .67-.21 2.2.82.64-.18 1.32-.27 2-.27.68 0 1.36.09 2 .27 1.53-1.04 2.2-.82 2.2-.82.44 1.1.16 1.92.08 2.12.51.56.82 1.27.82 2.15 0 3.07-1.87 3.75-3.65 3.95.29.25.54.73.54 1.48 0 1.07-.01 1.93-.01 2.2 0 .21.15.46.55.38A8.013 8.013 0 0016 8c0-4.42-3.58-8-8-8z"/></svg><div style="position:absolute;top:1373.71px;font-size:29.40px;line-height:29.40px;font-weight:400;color:#374151;white-space:nowrap;letter-spacing:0.200px;left:591.80px;">andygrunwald/<b style="font-weight:700">go-trending</b></div><div style="position:absolute;top:1410.97px;font-size:25.20px;line-height:25.20px;font-weight:400;color:#4b5563;white-space:nowrap;letter-spacing:0.240px;left:591.50px;">Go library for accessing trending repositories and developers at Github.</div><div style="position:absolute;left:1915.50px;top:1380.00px;width:67.00px;height:46px;line-height:46px;border-radius:23px;background:#d1fae5;color:#047857;font-size:25.2px;font-weight:700;letter-spacing:0.8px;text-indent:0.8px;text-align:center">111</div><div style="position:absolute;left:2105.35px;top:1380.00px;width:48.70px;height:46px;line-height:46px;border-radius:23px;background:#f3f4f6;color:#1f2937;font-size:25.2px;font-weight:700;letter-spacing:0.8px;text-indent:0.8px;text-align:center">0</div><div style="position:absolute;left:2328.50px;top:1380.00px;width:48.70px;height:46px;line-height:46px;border-radius:23px;background:#f3f4f6;color:#1f2937;font-size:25.2px;font-weight:700;letter-spacing:0.8px;text-indent:0.8px;text-align:center">0</div><div style="position:absolute;left:2549.45px;top:1380.00px;width:48.70px;height:46px;line-height:46px;border-radius:23px;background:#d1fae5;color:#047857;font-size:25.2px;font-weight:700;letter-spacing:0.8px;text-indent:0.8px;text-align:center">4</div><svg style="position:absolute;left:2709.7px;top:1380px" width="48" height="48" viewBox="0 0 24 24" fill="none" stroke="#374151" stroke-width="2" stroke-linecap="round" stroke-linejoin="round"><path d="M15 12a3 3 0 11-6 0 3 3 0 016 0z M2.458 12C3.732 7.943 7.523 5 12 5c4.478 0 8.268 2.943 9.542 7-1.274 4.057-5.064 7-9.542 7-4.477 0-8.268-2.943-9.542-7z"/></svg><div style="position:absolute;top:1389.41px;font-size:29.40px;line-height:29.40px;font-weight:400;color:#374151;white-space:nowrap;letter-spacing:-0.020px;left:2907.00px;">5 years ago</div><svg style="position:absolute;left:3174px;top:1384.3px" width="40" height="40" viewBox="0 0 16 16" fill="#2563eb"><path d="M8 0C3.58 0 0 3.58 0 8c0 3.54 2.29 6.53 5.47 7.59.4.07.55-.17.55-.38 0-.19-.01-.82-.01-1.49-2.01.37-2.53-.49-2.69-.94-.09-.23-.48-.94-.82-1.13-.28-.15-.68-.52-.01-.53.63-.01 1.08.58 1.23.82.72 1.21 1.87.87 2.33.66.07-.52.28-.87.51-1.07-1.78-.2-3.64-.89-3.64-3.95 0-.87.31-1.59.82-2.15-.08-.2-.36-1.02.08-2.12 0 0 .67-.21 2.2.82.64-.18 1.32-.27 2-.27.68 0 1.36.09 2 .27 1.53-1.04 2.2-.82 2.2-.82.44 1.1.16 1.92.08 2.12.51.56.82 1.27.82 2.15 0 3.07-1.87 3.75-3.65 3.95.29.25.54.73.54 1.48 0 1.07-.01 1.93-.01 2.2 0 .21.15.46.55.38A8.013 8.013 0 0016 8c0-4.42-3.58-8-8-8z"/></svg><div style="position:absolute;top:1495.71px;font-size:29.40px;line-height:29.40px;font-weight:400;color:#374151;white-space:nowrap;letter-spacing:0.140px;left:591.80px;">andygrunwald/<b style="font-weight:700">FOM-LaTeX-Template</b></div><div style="position:absolute;top:1532.97px;font-size:25.20px;line-height:25.20px;font-weight:400;color:#4b5563;white-space:nowrap;letter-spacing:0.190px;left:591.50px;">A LaTeX template for term paper, bachelor or master thesis for &quot;FOM University of Applied Sciences&quot;</div><div style="position:absolute;left:1917.30px;top:1502.00px;width:63.40px;height:46px;line-height:46px;border-radius:23px;background:#d1fae5;color:#047857;font-size:25.2px;font-weight:700;letter-spacing:0.8px;text-indent:0.8px;text-align:center">96</div><div style="position:absolute;left:2105.35px;top:1502.00px;width:48.70px;height:46px;line-height:46px;border-radius:23px;background:#f3f4f6;color:#1f2937;font-size:25.2px;font-weight:700;letter-spacing:0.8px;text-indent:0.8px;text-align:center">0</div><div style="position:absolute;left:2328.50px;top:1502.00px;width:48.70px;height:46px;line-height:46px;border-radius:23px;background:#d1fae5;color:#047857;font-size:25.2px;font-weight:700;letter-spacing:0.8px;text-indent:0.8px;text-align:center">2</div><div style="position:absolute;left:2542.10px;top:1502.00px;width:63.40px;height:46px;line-height:46px;border-radius:23px;background:#d1fae5;color:#047857;font-size:25.2px;font-weight:700;letter-spacing:0.8px;text-indent:0.8px;text-align:center">22</div><svg style="position:absolute;left:2709.7px;top:1502px" width="48" height="48" viewBox="0 0 24 24" fill="none" stroke="#374151" stroke-width="2" stroke-linecap="round" stroke-linejoin="round"><path d="M15 12a3 3 0 11-6 0 3 3 0 016 0z M2.458 12C3.732 7.943 7.523 5 12 5c4.478 0 8.268 2.943 9.542 7-1.274 4.057-5.064 7-9.542 7-4.477 0-8.268-2.943-9.542-7z"/></svg><div style="position:absolute;top:1511.41px;font-size:29.40px;line-height:29.40px;font-weight:400;color:#374151;white-space:nowrap;letter-spacing:-0.020px;left:2907.00px;">7 years ago</div><svg style="position:absolute;left:3174px;top:1506.3px" width="40" height="40" viewBox="0 0 16 16" fill="#2563eb"><path d="M8 0C3.58 0 0 3.58 0 8c0 3.54 2.29 6.53 5.47 7.59.4.07.55-.17.55-.38 0-.19-.01-.82-.01-1.49-2.01.37-2.53-.49-2.69-.94-.09-.23-.48-.94-.82-1.13-.28-.15-.68-.52-.01-.53.63-.01 1.08.58 1.23.82.72 1.21 1.87.87 2.33.66.07-.52.28-.87.51-1.07-1.78-.2-3.64-.89-3.64-3.95 0-.87.31-1.59.82-2.15-.08-.2-.36-1.02.08-2.12 0 0 .67-.21 2.2.82.64-.18 1.32-.27 2-.27.68 0 1.36.09 2 .27 1.53-1.04 2.2-.82 2.2-.82.44 1.1.16 1.92.08 2.12.51.56.82 1.27.82 2.15 0 3.07-1.87 3.75-3.65 3.95.29.25.54.73.54 1.48 0 1.07-.01 1.93-.01 2.2 0 .21.15.46.55.38A8.013 8.013 0 0016 8c0-4.42-3.58-8-8-8z"/></svg><div style="position:absolute;top:1617.71px;font-size:29.40px;line-height:29.40px;font-weight:400;color:#374151;white-space:nowrap;letter-spacing:0.030px;left:591.80px;">andygrunwald/<b style="font-weight:700">TrendingGithub</b></div><div style="position:absolute;top:1654.97px;font-size:25.20px;line-height:25.20px;font-weight:400;color:#4b5563;white-space:nowrap;letter-spacing:0.320px;left:591.50px;">A twitter bot (@TrendingGithub) to tweet trending repositories and developers from GitHub</div><div style="position:absolute;left:1917.30px;top:1624.00px;width:63.40px;height:46px;line-height:46px;border-radius:23px;background:#d1fae5;color:#047857;font-size:25.2px;font-weight:700;letter-spacing:0.8px;text-indent:0.8px;text-align:center">96</div><div style="position:absolute;left:2105.35px;top:1624.00px;width:48.70px;height:46px;line-height:46px;border-radius:23px;background:#f3f4f6;color:#1f2937;font-size:25.2px;font-weight:700;letter-spacing:0.8px;text-indent:0.8px;text-align:center">0</div><div style="position:absolute;left:2328.50px;top:1624.00px;width:48.70px;height:46px;line-height:46px;border-radius:23px;background:#f3f4f6;color:#1f2937;font-size:25.2px;font-weight:700;letter-spacing:0.8px;text-indent:0.8px;text-align:center">0</div><div style="position:absolute;left:2549.45px;top:1624.00px;width:48.70px;height:46px;line-height:46px;border-radius:23px;background:#d1fae5;color:#047857;font-size:25.2px;font-weight:700;letter-spacing:0.8px;text-indent:0.8px;text-align:center">9</div><svg style="position:absolute;left:2709.7px;top:1624px" width="48" height="48" viewBox="0 0 24 24" fill="none" stroke="#374151" stroke-width="2" stroke-linecap="round" stroke-linejoin="round"><path d="M15 12a3 3 0 11-6 0 3 3 0 016 0z M2.458 12C3.732 7.943 7.523 5 12 5c4.478 0 8.268 2.943 9.542 7-1.274 4.057-5.064 7-9.542 7-4.477 0-8.268-2.943-9.542-7z"/></svg><div style="position:absolute;top:1633.41px;font-size:29.40px;line-height:29.40px;font-weight:400;color:#374151;white-space:nowrap;letter-spacing:-0.020px;left:2907.00px;">5 years ago</div><svg style="position:absolute;left:3174px;top:1628.3px" width="40" height="40" viewBox="0 0 16 16" fill="#2563eb"><path d="M8 0C3.58 0 0 3.58 0 8c0 3.54 2.29 6.53 5.47 7.59.4.07.55-.17.55-.38 0-.19-.01-.82-.01-1.49-2.01.37-2.53-.49-2.69-.94-.09-.23-.48-.94-.82-1.13-.28-.15-.68-.52-.01-.53.63-.01 1.08.58 1.23.82.72 1.21 1.87.87 2.33.66.07-.52.28-.87.51-1.07-1.78-.2-3.64-.89-3.64-3.95 0-.87.31-1.59.82-2.15-.08-.2-.36-1.02.08-2.12 0 0 .67-.21 2.2.82.64-.18 1.32-.27 2-.27.68 0 1.36.09 2 .27 1.53-1.04 2.2-.82 2.2-.82.44 1.1.16 1.92.08 2.12.51.56.82 1.27.82 2.15 0 3.07-1.87 3.75-3.65 3.95.29.25.54.73.54 1.48 0 1.07-.01 1.93-.01 2.2 0 .21.15.46.55.38A8.013 8.013 0 0016 8c0-4.42-3.58-8-8-8z"/></svg>
</div>
</div></body></html>
